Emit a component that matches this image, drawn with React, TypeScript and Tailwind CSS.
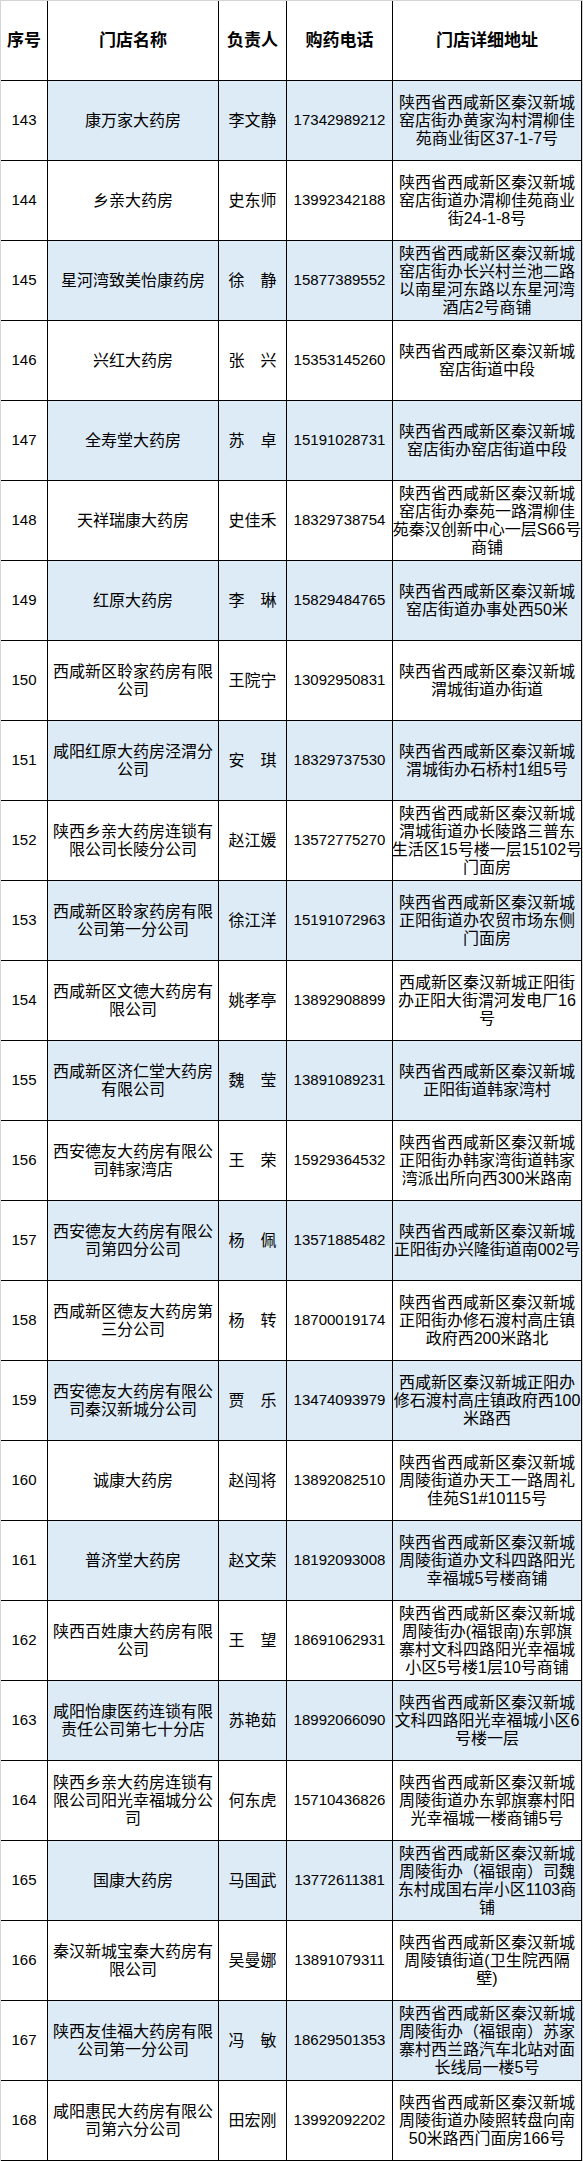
type Row = {
  no: number;
  name: string[];
  person: string;
  phone: string;
  addr: string[];
};

const rows: Row[] = [
  { no: 143, name: ['康万家大药房'], person: '李文静', phone: '17342989212', addr: ['陕西省西咸新区秦汉新城', '窑店街办黄家沟村渭柳佳', '苑商业街区37-1-7号'] },
  { no: 144, name: ['乡亲大药房'], person: '史东师', phone: '13992342188', addr: ['陕西省西咸新区秦汉新城', '窑店街道办渭柳佳苑商业', '街24-1-8号'] },
  { no: 145, name: ['星河湾致美怡康药房'], person: '徐　静', phone: '15877389552', addr: ['陕西省西咸新区秦汉新城', '窑店街办长兴村兰池二路', '以南星河东路以东星河湾', '酒店2号商铺'] },
  { no: 146, name: ['兴红大药房'], person: '张　兴', phone: '15353145260', addr: ['陕西省西咸新区秦汉新城', '窑店街道中段'] },
  { no: 147, name: ['全寿堂大药房'], person: '苏　卓', phone: '15191028731', addr: ['陕西省西咸新区秦汉新城', '窑店街办窑店街道中段'] },
  { no: 148, name: ['天祥瑞康大药房'], person: '史佳禾', phone: '18329738754', addr: ['陕西省西咸新区秦汉新城', '窑店街办秦苑一路渭柳佳', '苑秦汉创新中心一层S66号', '商铺'] },
  { no: 149, name: ['红原大药房'], person: '李　琳', phone: '15829484765', addr: ['陕西省西咸新区秦汉新城', '窑店街道办事处西50米'] },
  { no: 150, name: ['西咸新区聆家药房有限', '公司'], person: '王院宁', phone: '13092950831', addr: ['陕西省西咸新区秦汉新城', '渭城街道办街道'] },
  { no: 151, name: ['咸阳红原大药房泾渭分', '公司'], person: '安　琪', phone: '18329737530', addr: ['陕西省西咸新区秦汉新城', '渭城街办石桥村1组5号'] },
  { no: 152, name: ['陕西乡亲大药房连锁有', '限公司长陵分公司'], person: '赵江媛', phone: '13572775270', addr: ['陕西省西咸新区秦汉新城', '渭城街道办长陵路三普东', '生活区15号楼一层15102号', '门面房'] },
  { no: 153, name: ['西咸新区聆家药房有限', '公司第一分公司'], person: '徐江洋', phone: '15191072963', addr: ['陕西省西咸新区秦汉新城', '正阳街道办农贸市场东侧', '门面房'] },
  { no: 154, name: ['西咸新区文德大药房有', '限公司'], person: '姚孝亭', phone: '13892908899', addr: ['西咸新区秦汉新城正阳街', '办正阳大街渭河发电厂16', '号'] },
  { no: 155, name: ['西咸新区济仁堂大药房', '有限公司'], person: '魏　莹', phone: '13891089231', addr: ['陕西省西咸新区秦汉新城', '正阳街道韩家湾村'] },
  { no: 156, name: ['西安德友大药房有限公', '司韩家湾店'], person: '王　荣', phone: '15929364532', addr: ['陕西省西咸新区秦汉新城', '正阳街办韩家湾街道韩家', '湾派出所向西300米路南'] },
  { no: 157, name: ['西安德友大药房有限公', '司第四分公司'], person: '杨　佩', phone: '13571885482', addr: ['陕西省西咸新区秦汉新城', '正阳街办兴隆街道南002号'] },
  { no: 158, name: ['西咸新区德友大药房第', '三分公司'], person: '杨　转', phone: '18700019174', addr: ['陕西省西咸新区秦汉新城', '正阳街办修石渡村高庄镇', '政府西200米路北'] },
  { no: 159, name: ['西安德友大药房有限公', '司秦汉新城分公司'], person: '贾　乐', phone: '13474093979', addr: ['西咸新区秦汉新城正阳办', '修石渡村高庄镇政府西100', '米路西'] },
  { no: 160, name: ['诚康大药房'], person: '赵闯将', phone: '13892082510', addr: ['陕西省西咸新区秦汉新城', '周陵街道办天工一路周礼', '佳苑S1#10115号'] },
  { no: 161, name: ['普济堂大药房'], person: '赵文荣', phone: '18192093008', addr: ['陕西省西咸新区秦汉新城', '周陵街道办文科四路阳光', '幸福城5号楼商铺'] },
  { no: 162, name: ['陕西百姓康大药房有限', '公司'], person: '王　望', phone: '18691062931', addr: ['陕西省西咸新区秦汉新城', '周陵街办(福银南)东郭旗', '寨村文科四路阳光幸福城', '小区5号楼1层10号商铺'] },
  { no: 163, name: ['咸阳怡康医药连锁有限', '责任公司第七十分店'], person: '苏艳茹', phone: '18992066090', addr: ['陕西省西咸新区秦汉新城', '文科四路阳光幸福城小区6', '号楼一层'] },
  { no: 164, name: ['陕西乡亲大药房连锁有', '限公司阳光幸福城分公', '司'], person: '何东虎', phone: '15710436826', addr: ['陕西省西咸新区秦汉新城', '周陵街道办东郭旗寨村阳', '光幸福城一楼商铺5号'] },
  { no: 165, name: ['国康大药房'], person: '马国武', phone: '13772611381', addr: ['陕西省西咸新区秦汉新城', '周陵街办（福银南）司魏', '东村成国右岸小区1103商', '铺'] },
  { no: 166, name: ['秦汉新城宝秦大药房有', '限公司'], person: '吴曼娜', phone: '13891079311', addr: ['陕西省西咸新区秦汉新城', '周陵镇街道(卫生院西隔', '壁)'] },
  { no: 167, name: ['陕西友佳福大药房有限', '公司第一分公司'], person: '冯　敏', phone: '18629501353', addr: ['陕西省西咸新区秦汉新城', '周陵街办（福银南）苏家', '寨村西兰路汽车北站对面', '长线局一楼5号'] },
  { no: 168, name: ['咸阳惠民大药房有限公', '司第六分公司'], person: '田宏刚', phone: '13992092202', addr: ['陕西省西咸新区秦汉新城', '周陵街道办陵照转盘向南', '50米路西门面房166号'] },
];

const cell = 'h-[80px] border-r border-b border-black flex flex-col items-center justify-center text-center overflow-hidden';

function Lines({ lines }: { lines: string[] }) {
  return (
    <>
      {lines.map((l, i) => (
        <div key={i} className="whitespace-nowrap leading-[18px]">
          {l}
        </div>
      ))}
    </>
  );
}

export default function App() {
  return (
    <div
      className="w-[583px] bg-[#d4d4d4] pt-[1px] pl-[1px] text-black text-[16px]"
      style={{ fontFamily: '"Liberation Sans", "Noto Sans CJK SC", sans-serif' }}
    >
      <div className="grid grid-cols-[47px_171px_68px_106px_189px] w-[581px]">
        {/* header */}
        {['序号', '门店名称', '负责人', '购药电话', '门店详细地址'].map((h) => (
          <div key={h} className={`${cell} bg-white font-bold text-[17px]`}>
            <span className="whitespace-nowrap">{h}</span>
          </div>
        ))}

        {rows.map((r) => {
          const tint = r.no % 2 === 1 ? 'bg-[#ddebf7]' : 'bg-white';
          return (
            <div key={r.no} className="contents">
              <div className={`${cell} bg-white text-[15px]`}>{r.no}</div>
              <div className={`${cell} ${tint}`}>
                <Lines lines={r.name} />
              </div>
              <div className={`${cell} ${tint}`}>
                <span className="whitespace-nowrap">{r.person}</span>
              </div>
              <div className={`${cell} ${tint} text-[15px]`}>{r.phone}</div>
              <div className={`${cell} ${tint}`}>
                <Lines lines={r.addr} />
              </div>
            </div>
          );
        })}
      </div>
    </div>
  );
}
